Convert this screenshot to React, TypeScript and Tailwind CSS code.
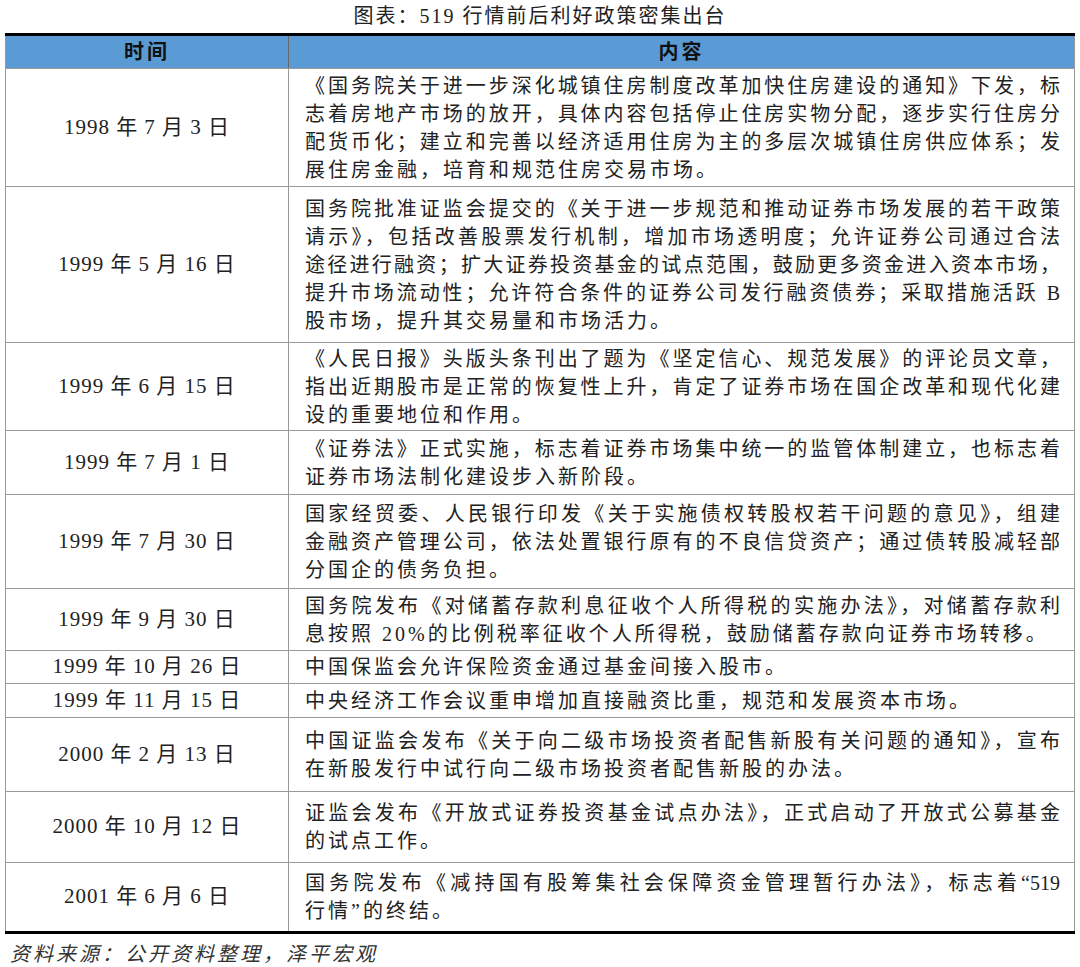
const rows: [string, string[], number][] = [
  ["1998 年 7 月 3 日", ["《国务院关于进一步深化城镇住房制度改革加快住房建设的通知》下发，标", "志着房地产市场的放开，具体内容包括停止住房实物分配，逐步实行住房分", "配货币化；建立和完善以经济适用住房为主的多层次城镇住房供应体系；发", "展住房金融，培育和规范住房交易市场。"], 118],
  ["1999 年 5 月 16 日", ["国务院批准证监会提交的《关于进一步规范和推动证券市场发展的若干政策", "请示》，包括改善股票发行机制，增加市场透明度；允许证券公司通过合法", "途径进行融资；扩大证券投资基金的试点范围，鼓励更多资金进入资本市场，", "提升市场流动性；允许符合条件的证券公司发行融资债券；采取措施活跃 B", "股市场，提升其交易量和市场活力。"], 156],
  ["1999 年 6 月 15 日", ["《人民日报》头版头条刊出了题为《坚定信心、规范发展》的评论员文章，", "指出近期股市是正常的恢复性上升，肯定了证券市场在国企改革和现代化建", "设的重要地位和作用。"], 88],
  ["1999 年 7 月 1 日", ["《证券法》正式实施，标志着证券市场集中统一的监管体制建立，也标志着", "证券市场法制化建设步入新阶段。"], 64],
  ["1999 年 7 月 30 日", ["国家经贸委、人民银行印发《关于实施债权转股权若干问题的意见》，组建", "金融资产管理公司，依法处置银行原有的不良信贷资产；通过债转股减轻部", "分国企的债务负担。"], 94],
  ["1999 年 9 月 30 日", ["国务院发布《对储蓄存款利息征收个人所得税的实施办法》，对储蓄存款利", "息按照 20%的比例税率征收个人所得税，鼓励储蓄存款向证券市场转移。"], 62],
  ["1999 年 10 月 26 日", ["中国保监会允许保险资金通过基金间接入股市。"], 33],
  ["1999 年 11 月 15 日", ["中央经济工作会议重申增加直接融资比重，规范和发展资本市场。"], 34],
  ["2000 年 2 月 13 日", ["中国证监会发布《关于向二级市场投资者配售新股有关问题的通知》，宣布", "在新股发行中试行向二级市场投资者配售新股的办法。"], 74],
  ["2000 年 10 月 12 日", ["证监会发布《开放式证券投资基金试点办法》，正式启动了开放式公募基金", "的试点工作。"], 71],
  ["2001 年 6 月 6 日", ["国务院发布《减持国有股筹集社会保障资金管理暂行办法》，标志着“519", "行情”的终结。"], 68],
];

export default function App() {
  const font = { fontFamily: '"Liberation Serif","Noto Sans CJK SC",serif' };
  return (
    <div className="w-[1080px] h-[967px] bg-white text-[#222]" style={font}>
      <div className="h-[33px] text-center text-[20px] tracking-[2px] leading-[33px]">图表：519 行情前后利好政策密集出台</div>
      <div className="mx-[5px] w-[1070px] border-t-[3px] border-b-[3px] border-black">
        <div className="border-l border-r border-[#999]">
          <div className="flex h-[33px] bg-[#5b9bd5] text-[20px] font-bold text-[#111] border-b border-[#999]">
            <div className="w-[283px] border-r border-[#666] flex items-center justify-center tracking-[3px]">时间</div>
            <div className="flex-1 flex items-center justify-center tracking-[3px]">内容</div>
          </div>
          {rows.map(([d, lines, h], i) => (
            <div key={i} className={`flex ${i < rows.length - 1 ? "border-b border-[#999]" : ""}`} style={{ height: h }}>
              <div className="w-[283px] border-r border-[#999] flex items-center justify-center text-[21px] tracking-[1px]">{d}</div>
              <div className="flex-1 flex flex-col justify-center pl-[16px] pr-[14px] text-[20px] leading-[28px]">
                {lines.map((l, j) => (
                  <div key={j} className={`whitespace-nowrap ${j < lines.length - 1 ? "text-justify [text-align-last:justify]" : "tracking-[3px]"}`}>{l}</div>
                ))}
              </div>
            </div>
          ))}
        </div>
      </div>
      <div className="pl-[10px] pt-[5px] text-[20px] italic text-[#333] tracking-[3px]">资料来源：公开资料整理，泽平宏观</div>
    </div>
  );
}
